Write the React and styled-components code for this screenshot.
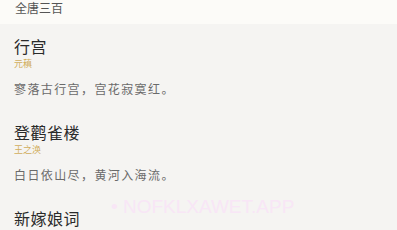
import React from "react";
import styled, { createGlobalStyle } from "styled-components";

const Global = createGlobalStyle`
  html, body { margin: 0; padding: 0; background: #f5f4f2; }
  body { font-family: "Noto Sans CJK SC", "Noto Sans", sans-serif; overflow: hidden; }
`;

const Page = styled.div`
  position: relative;
  width: 397px;
  height: 230px;
  overflow: hidden;
  background: #f5f4f2;
`;

const Header = styled.div`
  height: 24px;
  background: #fcfbf8;
  display: flex;
  align-items: center;
  padding: 0 15px;
  box-sizing: border-box;
`;

const HeaderTitle = styled.span`
  font-size: 12px;
  color: #555;
  line-height: 1;
  margin-top: -8px;
`;

const List = styled.div`
  display: flex;
  flex-direction: column;
  padding: 12px 14px 0;
  gap: 25px;
`;

const Poem = styled.div`
  display: flex;
  flex-direction: column;
`;

const Title = styled.div`
  font-size: 16px;
  line-height: 20px;
  color: #2a2a2a;
  letter-spacing: 0.5px;
`;

const Author = styled.div`
  font-size: 9px;
  line-height: 12px;
  margin-top: 2px;
  color: #d1ad5c;
`;

const Line = styled.div`
  margin-top: 11px;
  font-size: 12px;
  line-height: 16px;
  letter-spacing: 1.4px;
  color: #6a6a6a;
`;

const Watermark = styled.div`
  position: absolute;
  left: 111px;
  top: 196px;
  font-family: "Liberation Sans", Arial, sans-serif;
  font-size: 19px;
  color: #f8e6f6;
  white-space: nowrap;
  pointer-events: none;
`;

const poems = [
  { title: "行宫", author: "元稹", line: "寥落古行宫，宫花寂寞红。" },
  { title: "登鹳雀楼", author: "王之涣", line: "白日依山尽，黄河入海流。" },
  { title: "新嫁娘词", author: "王建", line: "三日入厨下，洗手作羹汤。" },
];

export default function App() {
  return (
    <Page>
      <Global />
      <Header>
        <HeaderTitle>全唐三百</HeaderTitle>
      </Header>
      <List>
        {poems.map((p) => (
          <Poem key={p.title}>
            <Title>{p.title}</Title>
            <Author>{p.author}</Author>
            <Line>{p.line}</Line>
          </Poem>
        ))}
      </List>
      <Watermark>• NOFKLXAWET.APP</Watermark>
    </Page>
  );
}
